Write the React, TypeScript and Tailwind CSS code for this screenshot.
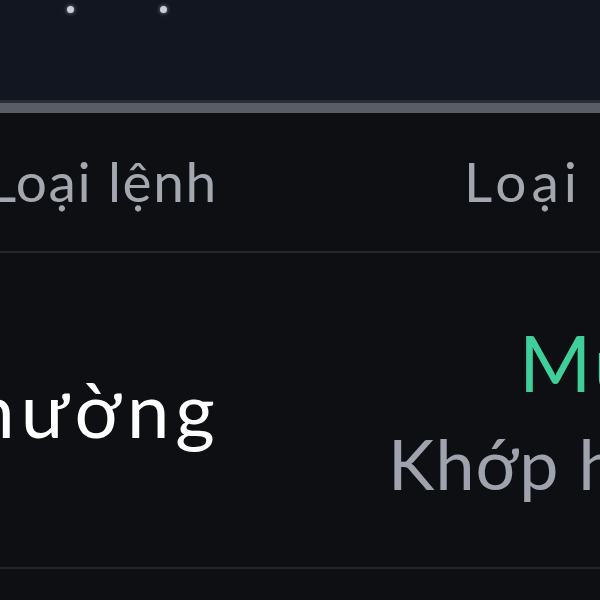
import React from 'react'

const font = { fontFamily: 'Lato, "Noto Sans", sans-serif' }

export default function App() {
  return (
    <div className="w-[600px] h-[600px] overflow-hidden bg-[#0e0f13]" style={font}>
      {/* Chart area with dots */}
      <div className="h-[100px] bg-[#111620]">
        <div className="flex items-center gap-[86px] pl-[67px] pt-[6px]">
          <span className="w-[7px] h-[7px] rounded-full bg-[#c9ced8] shadow-[0_0_4px_#8d93a0]" />
          <span className="w-[7px] h-[7px] rounded-full bg-[#c9ced8] shadow-[0_0_4px_#8d93a0]" />
        </div>
      </div>
      <div className="h-[3px] bg-[#2a2e37]" />
      <div className="h-[10px] bg-[#595d66]" />

      {/* Header */}
      <div className="flex h-[140px] border-b-2 border-[#24262b] pt-[41px] text-[55px] leading-none text-[#a3a7b0] whitespace-nowrap">
        <div className="w-[468px] shrink-0 ml-[-12px] tracking-[1.6px]">Loại lệnh</div>
        <div className="ml-[8px] tracking-[5px]">Loại lệnh</div>
      </div>

      {/* Row */}
      <div className="flex h-[316px] border-b-2 border-[#23252b] whitespace-nowrap">
        <div className="w-[519px] shrink-0 ml-[-78px] pt-[118px] text-[76px] leading-none text-white tracking-[6px]">
          Thường
        </div>
        <div className="flex flex-col ml-[78px] pt-[70px] leading-none">
          <span className="text-[78px] text-[#3fcf9b] tracking-[3px]">Mua</span>
          <span className="mt-[27px] ml-[-131px] text-[70px] text-[#9ea3ad] tracking-[1px]">Khớp hết</span>
        </div>
      </div>
    </div>
  )
}
